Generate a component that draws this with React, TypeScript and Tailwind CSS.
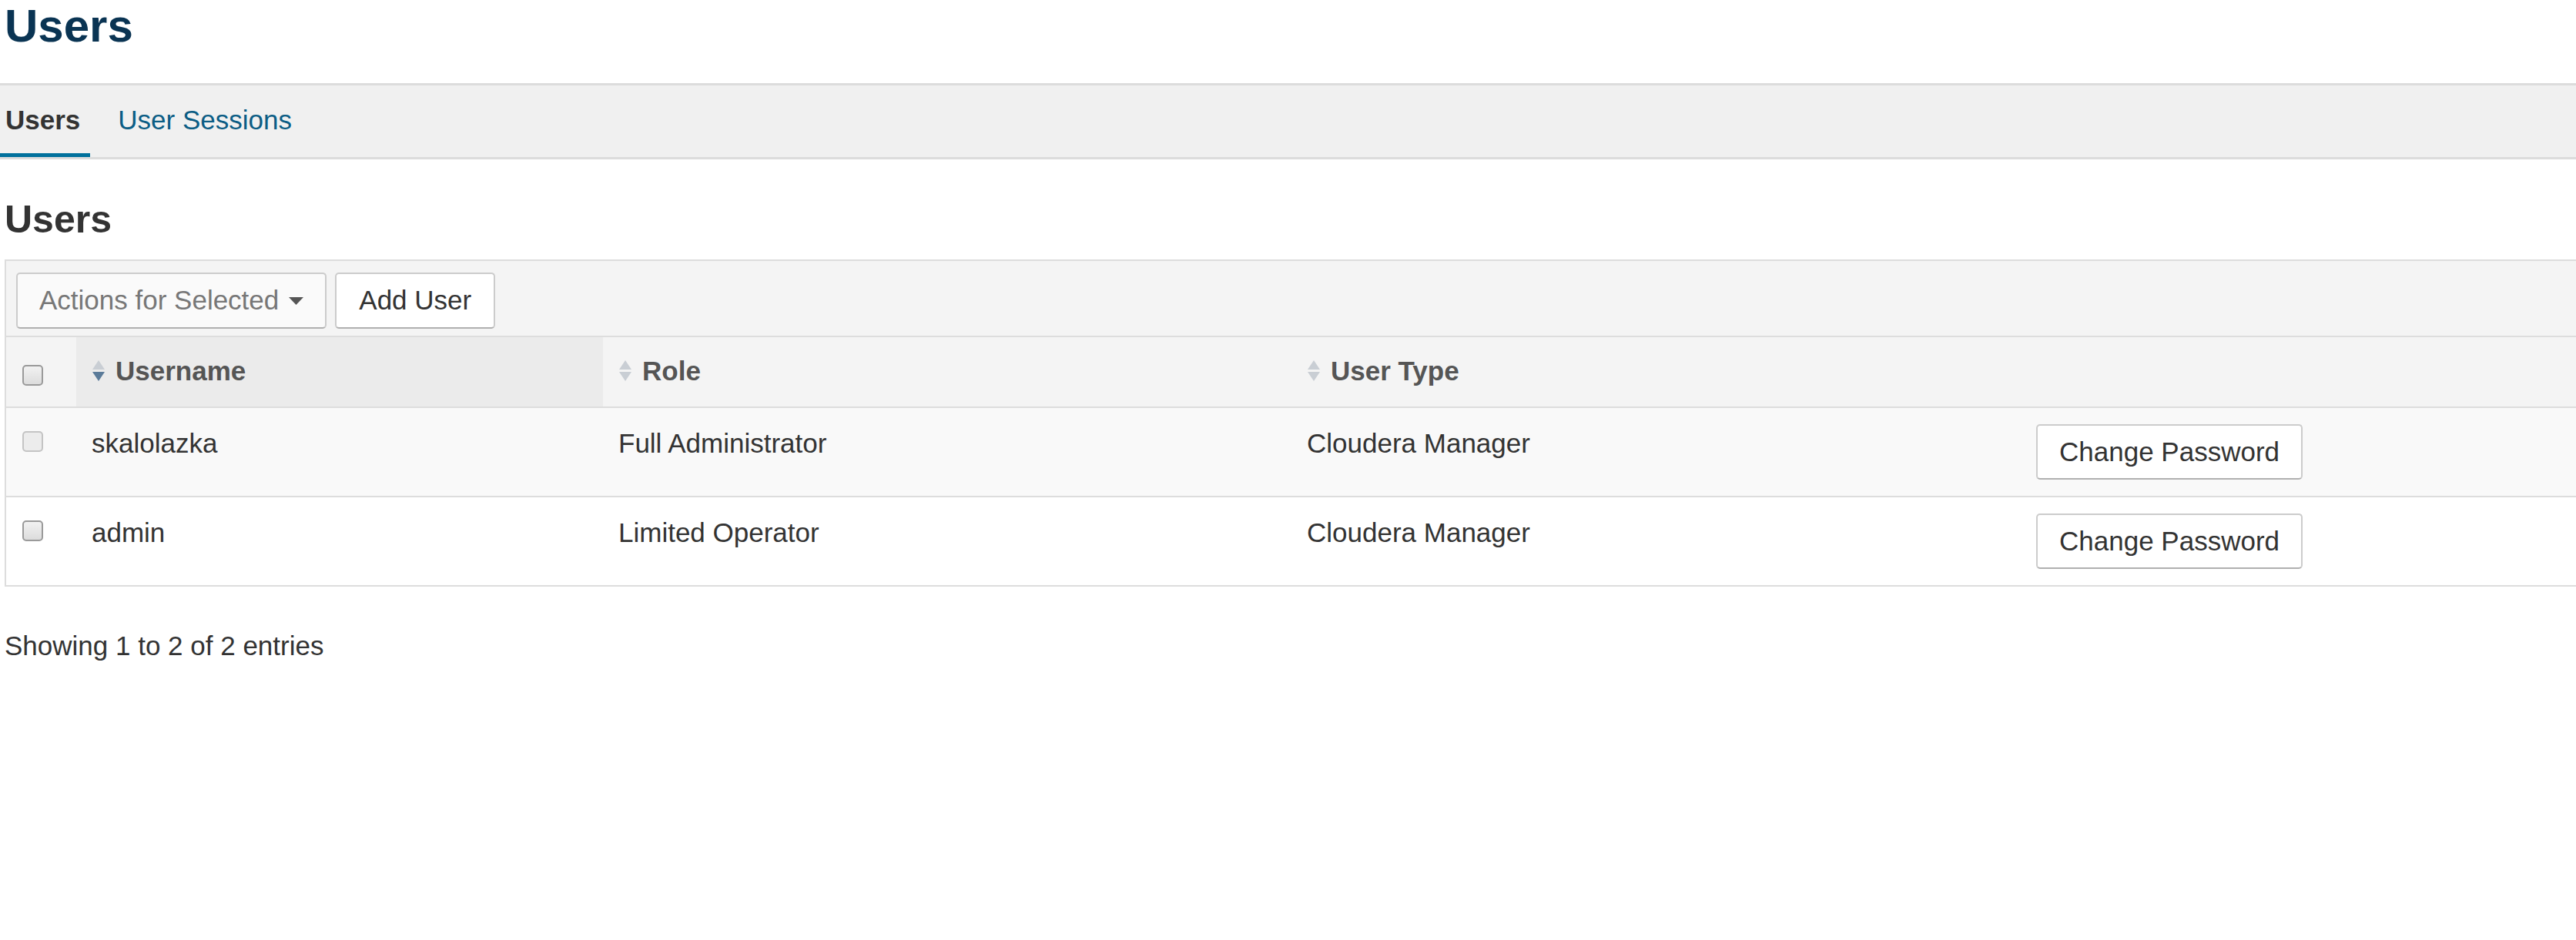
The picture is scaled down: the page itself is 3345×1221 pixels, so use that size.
import React from "react";

type User = {
  name: string;
  role: string;
  type: string;
  disabled?: boolean;
};

const users: User[] = [
  { name: "skalolazka", role: "Full Administrator", type: "Cloudera Manager", disabled: true },
  { name: "admin", role: "Limited Operator", type: "Cloudera Manager" },
];

function Checkbox({ disabled }: { disabled?: boolean }) {
  return (
    <div
      className={`h-[27px] w-[27px] rounded-[5px] border-2 ${
        disabled
          ? "border-[#c4c4c4] bg-[#ececec]"
          : "border-[#9a9a9a] bg-gradient-to-b from-[#f2f2f2] to-[#dcdcdc]"
      }`}
    />
  );
}

function SortIcon({ active }: { active?: boolean }) {
  return (
    <svg width="18" height="27" viewBox="0 0 18 27" className="shrink-0">
      <path d="M9 0 L17 12 L1 12 Z" fill="#c9ced4" />
      <path d="M1 15 L17 15 L9 27 Z" fill={active ? "#5b7b99" : "#c9ced4"} />
    </svg>
  );
}

function HeaderCell({
  label,
  width,
  active,
}: {
  label: string;
  width: string;
  active?: boolean;
}) {
  return (
    <div
      className={`${width} flex items-center gap-[13px] pl-[20px] pt-[19px] pb-[22px] ${
        active ? "bg-[#ebebeb]" : ""
      }`}
    >
      <SortIcon active={active} />
      <span className="font-bold leading-[49px] text-[#555]">{label}</span>
    </div>
  );
}

export default function App() {
  return (
    <div className="min-h-screen w-full overflow-hidden bg-white font-['Liberation_Sans',Arial,sans-serif] text-[35px] text-[#333]">
      {/* page title */}
      <h1 className="px-[6px] text-[60px] font-bold leading-[67px] text-[#0a3453]">
        Users
      </h1>

      {/* tabs */}
      <div className="mt-[41px] flex h-[99px] border-y-[3px] border-[#dcdcdc] bg-[#f0f0f0]">
        <div className="h-[93px] border-b-[5px] border-[#00709c] pl-[7px] pr-[13px] pt-[20px] font-bold leading-[49px] text-[#333]">
          Users
        </div>
        <div className="ml-[36px] h-[93px] pt-[20px] leading-[49px] text-[#0b5d85]">
          User Sessions
        </div>
      </div>

      <div className="px-[6px]">
        <h2 className="mt-[51px] text-[50px] font-bold leading-[55px] text-[#333]">
          Users
        </h2>

        {/* table */}
        <div className="mt-[24px] w-[3400px] border-2 border-[#dddddd]">
          {/* toolbar */}
          <div className="flex gap-[11px] border-b-2 border-[#dddddd] bg-[#f4f4f4] pl-[13px] pt-[15px] pb-[9px]">
            <button className="flex h-[73px] items-center gap-[13px] rounded-[5px] border-2 border-[#cccccc] border-b-[#b0b0b0] bg-[#fafafa] px-[28px] text-[#777]">
              <span>Actions for Selected</span>
              <svg width="19" height="10" viewBox="0 0 19 10">
                <path d="M0 0 L19 0 L9.5 10 Z" fill="#555" />
              </svg>
            </button>
            <button className="h-[73px] rounded-[5px] border-2 border-[#cccccc] border-b-[#b0b0b0] bg-white px-[29px] text-[#333]">
              Add User
            </button>
          </div>

          {/* header */}
          <div className="flex border-b-2 border-[#dddddd] bg-[#f4f4f4]">
            <div className="w-[91px] pl-[21px] pt-[36px]">
              <Checkbox />
            </div>
            <HeaderCell label="Username" width="w-[684px]" active />
            <HeaderCell label="Role" width="w-[894px]" />
            <HeaderCell label="User Type" width="w-[947px]" />
            <div className="flex-1" />
          </div>

          {/* rows */}
          {users.map((u, i) => (
            <div
              key={u.name}
              className={`flex ${i % 2 === 0 ? "bg-[#f9f9f9]" : "bg-white"} ${
                i < users.length - 1 ? "border-b-2 border-[#dddddd]" : ""
              }`}
            >
              <div className="w-[91px] pl-[21px] pt-[30px]">
                <Checkbox disabled={u.disabled} />
              </div>
              <div className="w-[684px] pl-[20px] pt-[21px] leading-[49px]">{u.name}</div>
              <div className="w-[894px] pl-[20px] pt-[21px] leading-[49px]">{u.role}</div>
              <div className="w-[947px] pl-[20px] pt-[21px] leading-[49px]">{u.type}</div>
              <div className="flex-1 pl-[20px] pt-[21px] pb-[21px]">
                <button className="h-[72px] rounded-[5px] border-2 border-[#cccccc] border-b-[#b0b0b0] bg-white px-[28px] text-[#333]">
                  Change Password
                </button>
              </div>
            </div>
          ))}
        </div>

        <div className="mt-[52px] leading-[49px]">Showing 1 to 2 of 2 entries</div>
      </div>
    </div>
  );
}
